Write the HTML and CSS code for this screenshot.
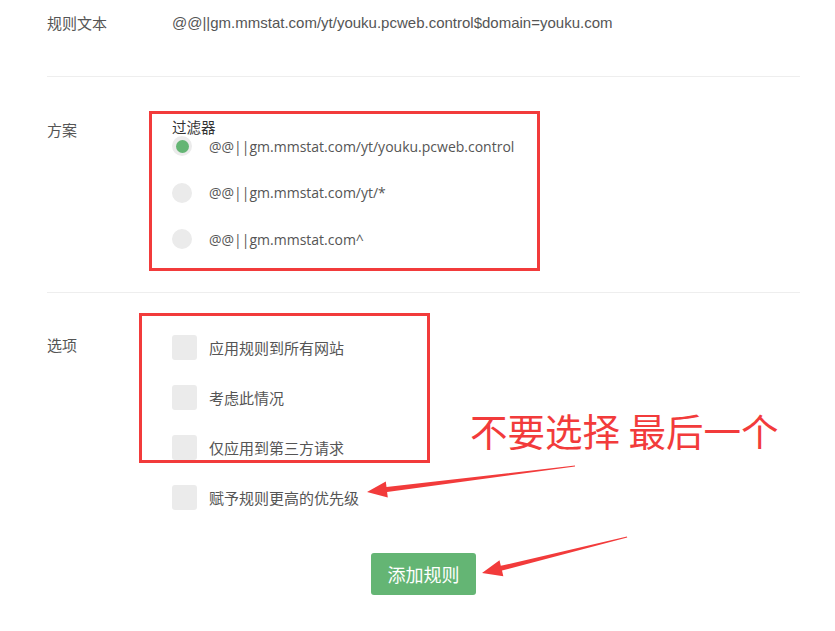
FILE: index.html
```html
<!DOCTYPE html>
<html lang="zh-CN">
<head>
  <meta charset="UTF-8" />
  <meta name="viewport" content="width=device-width, initial-scale=1.0" />
  <title>添加规则</title>
  <link rel="stylesheet" href="styles.css">
</head>
<body>
  <main class="form">
    <section class="row row-text">
      <div class="row-label">规则文本</div>
      <div class="row-value rule-text">@@||gm.mmstat.com/yt/youku.pcweb.control$domain=youku.com</div>
    </section>

    <section class="row row-plan">
      <div class="row-label">方案</div>
      <div class="row-value">
        <div class="group-title">过滤器</div>
        <ul class="radio-list">
          <li class="radio-item checked"><span class="radio"></span>@@||gm.mmstat.com/yt/youku.pcweb.control</li>
          <li class="radio-item"><span class="radio"></span>@@||gm.mmstat.com/yt/*</li>
          <li class="radio-item"><span class="radio"></span>@@||gm.mmstat.com^</li>
        </ul>
      </div>
    </section>

    <section class="row row-options">
      <div class="row-label">选项</div>
      <ul class="check-list">
        <li class="check-item"><span class="check"></span>应用规则到所有网站</li>
        <li class="check-item"><span class="check"></span>考虑此情况</li>
        <li class="check-item"><span class="check"></span>仅应用到第三方请求</li>
        <li class="check-item"><span class="check"></span>赋予规则更高的优先级</li>
      </ul>
    </section>

    <div class="actions">
      <button type="button" class="btn-add">添加规则</button>
    </div>
  </main>

  <!-- 标注 -->
  <div class="mark mark-plan"></div>
  <div class="mark mark-options"></div>
  <div class="note">不要选择 最后一个</div>
  <svg class="arrows" width="835" height="631" viewBox="0 0 835 631">
    <polygon points="575,465.6 386.5,487 385.8,481.4 367,492 387.8,497.6 387.1,492 575,466.4" />
    <polygon points="627,536.6 500.8,565.8 499.5,560.2 482,573 503.3,576.2 502,570.6 627.2,537.4" />
  </svg>
</body>
</html>
```

FILE: styles.css
```css
:root {
  --text: #555;
  --line: #eee;
  --box: #ebebeb;
  --green: #64b574;
  --red: #f23b3b;
}
html, body {
  margin: 0;
  padding: 0;
  background: #fff;
  font-family: 'Noto Sans CJK SC', sans-serif;
  color: var(--text);
}
body {
  position: relative;
  width: 835px;
  height: 631px;
  overflow: hidden;
}
ul {
  margin: 0;
  padding: 0;
  list-style: none;
}
.form {
  width: 753px;
  margin-left: 47px;
}
.row {
  display: flex;
  border-bottom: 1px solid var(--line);
}
.row-label {
  width: 125px;
  flex-shrink: 0;
  font-size: 15px;
  line-height: 20px;
}
.row-text {
  padding: 13px 0 43px 0;
}
.rule-text {
  font-family: 'Liberation Sans', Arial, sans-serif;
  font-size: 15px;
  line-height: 20px;
}
.row-plan {
  padding: 42px 0 43px 0;
}
.row-plan .row-label {
  margin-top: 1px;
}
.group-title {
  font-size: 14.5px;
  line-height: 16px;
  color: #333;
  margin-bottom: 1px;
}
.radio-list {
  display: flex;
  flex-direction: column;
  gap: 26.5px;
}
.radio-item {
  display: flex;
  align-items: center;
  height: 20px;
  font-family: 'Open Sans', sans-serif;
  font-size: 14px;
}
.radio {
  width: 20px;
  height: 20px;
  border-radius: 50%;
  background: var(--box);
  margin-right: 17px;
  display: flex;
  align-items: center;
  justify-content: center;
}
.radio-item.checked .radio::after {
  content: '';
  width: 13px;
  height: 13px;
  border-radius: 50%;
  background: var(--green);
}
.row-options {
  padding-top: 42px;
  border-bottom: none;
}
.check-list {
  display: flex;
  flex-direction: column;
  gap: 25px;
}
.check-item {
  display: flex;
  align-items: center;
  height: 25px;
  font-size: 15px;
}
.check {
  width: 25px;
  height: 25px;
  border-radius: 3px;
  background: var(--box);
  margin-right: 12px;
}
.actions {
  display: flex;
  justify-content: center;
  margin-top: 43px;
}
.btn-add {
  width: 105px;
  height: 42px;
  border: none;
  border-radius: 3px;
  background: var(--green);
  color: #fff;
  font-family: 'Noto Sans CJK SC', sans-serif;
  font-size: 18px;
  padding: 0;
}
/* 标注层 */
.mark {
  position: absolute;
  border: 3px solid var(--red);
  box-sizing: border-box;
}
.mark-plan {
  left: 149px;
  top: 111px;
  width: 391px;
  height: 160px;
}
.mark-options {
  left: 139px;
  top: 313px;
  width: 291px;
  height: 150px;
}
.note {
  position: absolute;
  left: 470px;
  top: 411px;
  font-size: 37.5px;
  line-height: 37px;
  color: var(--red);
  white-space: nowrap;
}
.arrows {
  position: absolute;
  left: 0;
  top: 0;
}
.arrows polygon {
  fill: var(--red);
}
```
